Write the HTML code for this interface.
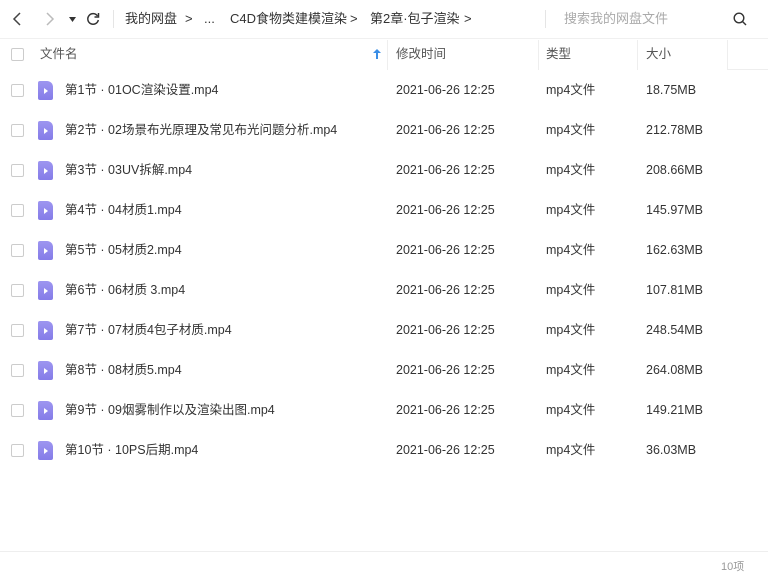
<!DOCTYPE html>
<html><head><meta charset="utf-8"><style>
*{margin:0;padding:0;box-sizing:border-box}
body{width:768px;height:584px;background:#fff;font-family:"Liberation Sans","Noto Sans CJK SC",sans-serif;font-size:12.5px;color:#333;position:relative;overflow:hidden}
.a{position:absolute;white-space:nowrap;line-height:16px}
.cb{position:absolute;left:11px;width:13px;height:13px;border:1px solid #ccc;border-radius:2px;background:#fff}
.ic{position:absolute;left:38px;width:15px;height:19px;background:linear-gradient(#9d95f0,#857ce8);border-radius:2px 6px 2px 2px}
.ic:after{content:"";position:absolute;left:6px;top:7px;border-left:4px solid #fff;border-top:3px solid transparent;border-bottom:3px solid transparent}
.g{color:#555}
.b{font-size:13px}
</style></head><body>
<svg class="a" style="left:12px;top:12px" width="12" height="14"><path d="M8 1L2 7l6 6" stroke="#444" stroke-width="1.5" fill="none"/></svg>
<svg class="a" style="left:44px;top:12px" width="12" height="14"><path d="M3 1l6 6-6 6" stroke="#bbb" stroke-width="1.5" fill="none"/></svg>
<svg class="a" style="left:69px;top:17px" width="8" height="6"><path d="M0 0h7L3.5 5z" fill="#333"/></svg>
<svg class="a" style="left:86px;top:12px" width="14" height="14"><path d="M11.5 4A5.3 5.3 0 1 0 12.3 8" stroke="#333" stroke-width="1.5" fill="none"/><path d="M12.5 1v4h-4" stroke="#333" stroke-width="1.5" fill="none"/></svg>
<div class="a" style="left:113px;top:10px;width:1px;height:18px;background:#e5e5e5"></div>
<div class="a b" style="left:125px;top:11px">我的网盘</div>
<div class="a b" style="left:185px;top:11px">&gt;</div>
<div class="a b" style="left:204px;top:11px">...</div>
<div class="a b" style="left:230px;top:11px">C4D食物类建模渲染</div>
<div class="a b" style="left:350px;top:11px">&gt;</div>
<div class="a b" style="left:370px;top:11px">第2章·包子渲染</div>
<div class="a b" style="left:464px;top:11px">&gt;</div>
<div class="a" style="left:545px;top:10px;width:1px;height:18px;background:#e5e5e5"></div>
<div class="a b" style="left:564px;top:11px;color:#aaa">搜索我的网盘文件</div>
<svg class="a" style="left:733px;top:12px" width="14" height="14"><circle cx="6" cy="6" r="4.8" stroke="#333" stroke-width="1.4" fill="none"/><path d="M9.5 9.5l3.5 3.5" stroke="#333" stroke-width="1.4"/></svg>
<div class="a" style="left:0;top:38px;width:768px;height:1px;background:#f0f0f0"></div>
<div class="cb" style="top:48px"></div>
<div class="a g" style="left:40px;top:46px">文件名</div>
<svg class="a" style="left:373px;top:49px" width="8" height="10"><path d="M4 0L0 4h3v6h2V4h3z" fill="#3a8ee6"/></svg>
<div class="a" style="left:387px;top:40px;width:1px;height:30px;background:#eee"></div>
<div class="a g" style="left:396px;top:46px">修改时间</div>
<div class="a" style="left:538px;top:40px;width:1px;height:30px;background:#eee"></div>
<div class="a g" style="left:546px;top:46px">类型</div>
<div class="a" style="left:637px;top:40px;width:1px;height:30px;background:#eee"></div>
<div class="a g" style="left:646px;top:46px">大小</div>
<div class="a" style="left:727px;top:40px;width:1px;height:30px;background:#eee"></div>
<div class="a" style="left:727px;top:69px;width:41px;height:1px;background:#eee"></div>

<div class="cb" style="top:84px"></div><div class="ic" style="top:81px"></div><div class="a" style="left:65px;top:82px">第1节 · 01OC渲染设置.mp4</div><div class="a" style="left:396px;top:82px">2021-06-26 12:25</div><div class="a" style="left:546px;top:82px">mp4文件</div><div class="a" style="left:646px;top:82px">18.75MB</div>
<div class="cb" style="top:124px"></div><div class="ic" style="top:121px"></div><div class="a" style="left:65px;top:122px">第2节 · 02场景布光原理及常见布光问题分析.mp4</div><div class="a" style="left:396px;top:122px">2021-06-26 12:25</div><div class="a" style="left:546px;top:122px">mp4文件</div><div class="a" style="left:646px;top:122px">212.78MB</div>
<div class="cb" style="top:164px"></div><div class="ic" style="top:161px"></div><div class="a" style="left:65px;top:162px">第3节 · 03UV拆解.mp4</div><div class="a" style="left:396px;top:162px">2021-06-26 12:25</div><div class="a" style="left:546px;top:162px">mp4文件</div><div class="a" style="left:646px;top:162px">208.66MB</div>
<div class="cb" style="top:204px"></div><div class="ic" style="top:201px"></div><div class="a" style="left:65px;top:202px">第4节 · 04材质1.mp4</div><div class="a" style="left:396px;top:202px">2021-06-26 12:25</div><div class="a" style="left:546px;top:202px">mp4文件</div><div class="a" style="left:646px;top:202px">145.97MB</div>
<div class="cb" style="top:244px"></div><div class="ic" style="top:241px"></div><div class="a" style="left:65px;top:242px">第5节 · 05材质2.mp4</div><div class="a" style="left:396px;top:242px">2021-06-26 12:25</div><div class="a" style="left:546px;top:242px">mp4文件</div><div class="a" style="left:646px;top:242px">162.63MB</div>
<div class="cb" style="top:284px"></div><div class="ic" style="top:281px"></div><div class="a" style="left:65px;top:282px">第6节 · 06材质 3.mp4</div><div class="a" style="left:396px;top:282px">2021-06-26 12:25</div><div class="a" style="left:546px;top:282px">mp4文件</div><div class="a" style="left:646px;top:282px">107.81MB</div>
<div class="cb" style="top:324px"></div><div class="ic" style="top:321px"></div><div class="a" style="left:65px;top:322px">第7节 · 07材质4包子材质.mp4</div><div class="a" style="left:396px;top:322px">2021-06-26 12:25</div><div class="a" style="left:546px;top:322px">mp4文件</div><div class="a" style="left:646px;top:322px">248.54MB</div>
<div class="cb" style="top:364px"></div><div class="ic" style="top:361px"></div><div class="a" style="left:65px;top:362px">第8节 · 08材质5.mp4</div><div class="a" style="left:396px;top:362px">2021-06-26 12:25</div><div class="a" style="left:546px;top:362px">mp4文件</div><div class="a" style="left:646px;top:362px">264.08MB</div>
<div class="cb" style="top:404px"></div><div class="ic" style="top:401px"></div><div class="a" style="left:65px;top:402px">第9节 · 09烟雾制作以及渲染出图.mp4</div><div class="a" style="left:396px;top:402px">2021-06-26 12:25</div><div class="a" style="left:546px;top:402px">mp4文件</div><div class="a" style="left:646px;top:402px">149.21MB</div>
<div class="cb" style="top:444px"></div><div class="ic" style="top:441px"></div><div class="a" style="left:65px;top:442px">第10节 · 10PS后期.mp4</div><div class="a" style="left:396px;top:442px">2021-06-26 12:25</div><div class="a" style="left:546px;top:442px">mp4文件</div><div class="a" style="left:646px;top:442px">36.03MB</div>

<div class="a" style="left:0;top:551px;width:768px;height:1px;background:#eee"></div>
<div class="a" style="left:721px;top:559px;font-size:11px;color:#999">10项</div>
</body></html>
